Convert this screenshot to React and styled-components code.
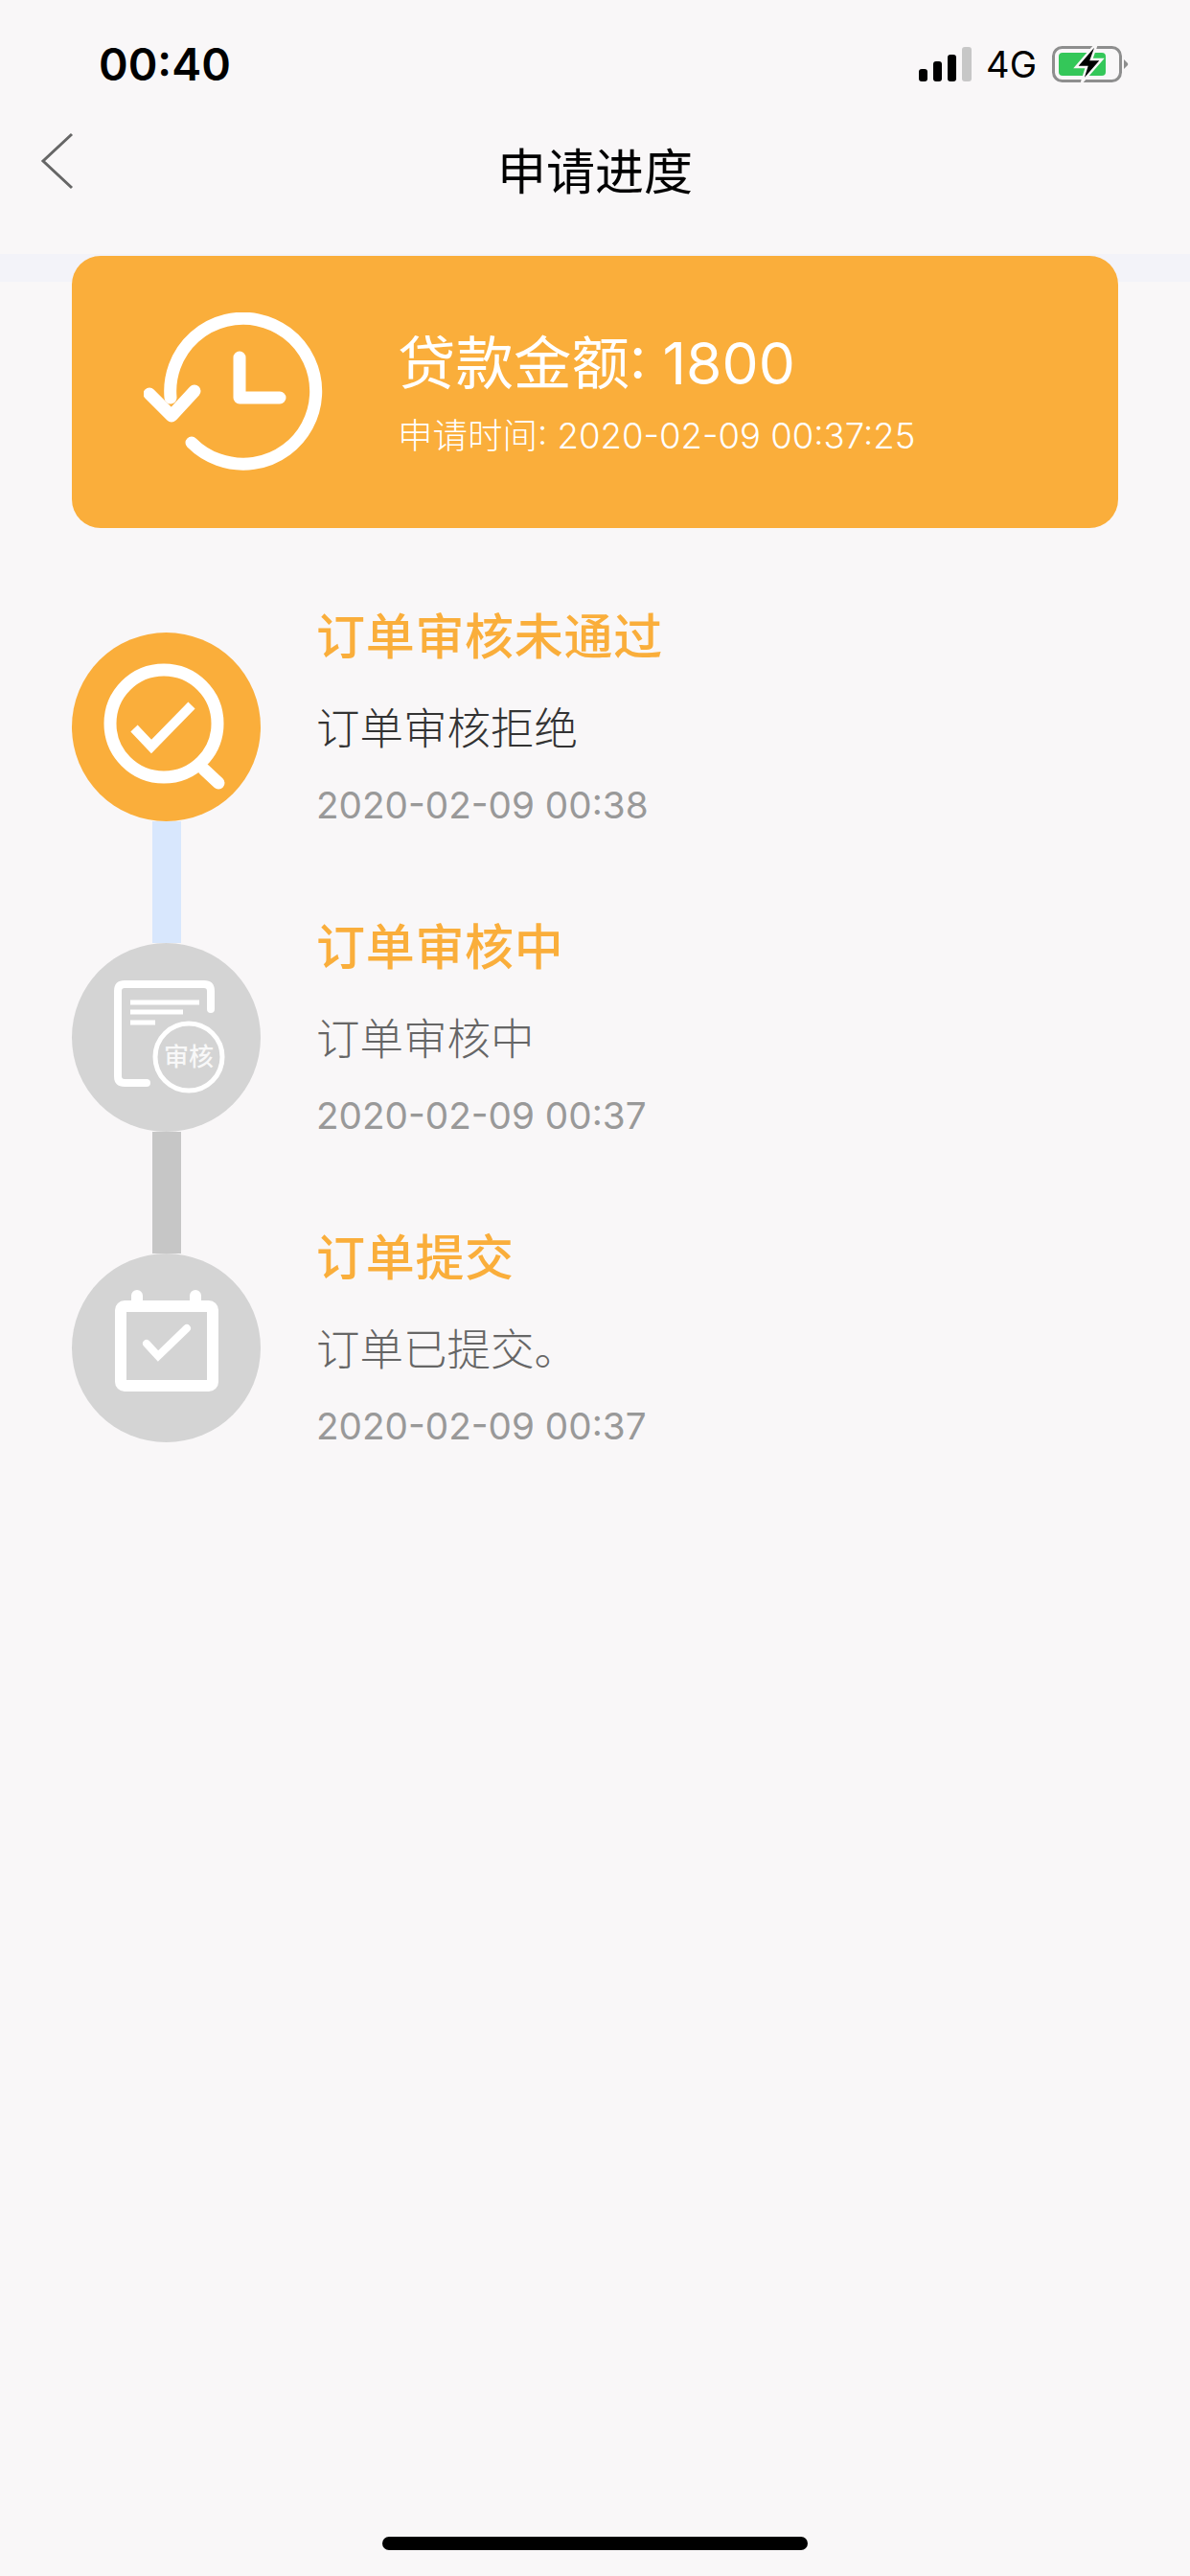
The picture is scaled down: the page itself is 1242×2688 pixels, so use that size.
import React from "react";
import styled, { createGlobalStyle } from "styled-components";

const orange = "#faae3b";
const pageBg = "#f9f7f8";

const GlobalStyle = createGlobalStyle`
  html, body {
    margin: 0;
    padding: 0;
    background: ${pageBg};
  }
  * {
    box-sizing: border-box;
  }
`;

const Page = styled.div`
  width: 1242px;
  height: 2688px;
  display: flex;
  flex-direction: column;
  background: ${pageBg};
  font-family: "Inter", "Noto Sans CJK SC", sans-serif;
  overflow: hidden;
`;

const StatusBar = styled.div`
  height: 115px;
  padding: 43px 64px 0 103px;
  display: flex;
  justify-content: space-between;
  align-items: flex-start;
`;

const Clock = styled.div`
  font-size: 46.5px;
  line-height: 48px;
  font-weight: 600;
  color: #000;
`;

const StatusIcons = styled.div`
  display: flex;
  align-items: center;
  margin-top: 4px;
`;

const NetworkLabel = styled.span`
  font-size: 38px;
  line-height: 40px;
  color: #000;
  margin: 0 16px 0 14px;
`;

const NavBar = styled.div`
  position: relative;
  height: 150px;
  display: flex;
  justify-content: center;
  padding-top: 28px;
`;

const BackIcon = styled.svg`
  position: absolute;
  left: 41px;
  top: 23px;
`;

const NavTitle = styled.h1`
  margin: 0;
  font-size: 51px;
  line-height: 66px;
  font-weight: 400;
  color: #000;
  font-family: "Noto Sans CJK SC", sans-serif;
`;

const Main = styled.main`
  position: relative;
  flex: 1;
  padding: 2px 75px 0;

  &::before {
    content: "";
    position: absolute;
    top: 0;
    left: 0;
    right: 0;
    height: 29px;
    background: #f3f3f9;
  }
`;

const SummaryCard = styled.section`
  position: relative;
  height: 284px;
  border-radius: 30px;
  background: ${orange};
  padding-left: 75px;
  display: flex;
  align-items: center;
  gap: 78px;
  color: #fff;
`;

const SummaryText = styled.div`
  display: flex;
  flex-direction: column;
  gap: 20px;
  margin-top: 2px;
`;

const Amount = styled.div`
  font-size: 60.5px;
  line-height: 70px;
  font-weight: 400;
`;

const AppliedAt = styled.div`
  font-size: 36.5px;
  line-height: 42px;
  font-weight: 300;
`;

const Timeline = styled.div`
  margin-top: 79px;
`;

const Step = styled.div`
  height: 324px;
  display: flex;
  gap: 58px;
`;

const Rail = styled.div`
  width: 197px;
  padding-top: 30px;
  display: flex;
  flex-direction: column;
  align-items: center;
  flex-shrink: 0;
`;

const Badge = styled.div`
  width: 197px;
  height: 197px;
  border-radius: 50%;
  background: ${(p) => (p.$active ? orange : "#d4d4d4")};
  flex-shrink: 0;

  svg {
    display: block;
  }
`;

const Connector = styled.div`
  width: 30px;
  height: 127px;
  flex-shrink: 0;
  background: ${(p) => p.$color};
`;

const StepBody = styled.div`
  margin-top: 0;
`;

const StepTitle = styled.div`
  font-family: "Noto Sans CJK SC", sans-serif;
  font-size: 51px;
  line-height: 62px;
  font-weight: 500;
  letter-spacing: 0.7px;
  color: ${orange};
`;

const StepNote = styled.div`
  font-family: "Noto Sans CJK SC", sans-serif;
  font-size: 45.5px;
  line-height: 56px;
  margin-top: 37px;
  font-weight: 300;
  color: ${(p) => (p.$active ? "#333" : "#666")};
`;

const StepDate = styled.div`
  font-size: 38.7px;
  line-height: 46px;
  margin-top: 32px;
  color: #999;
`;

const HomeBar = styled.div`
  position: absolute;
  left: 399px;
  top: 2647px;
  width: 444px;
  height: 14px;
  border-radius: 7px;
  background: #000;
`;

const Signal = () => (
  <svg width="56" height="36" viewBox="0 0 56 36">
    <rect x="0" y="23" width="9" height="13" rx="3" fill="#000" />
    <rect x="15" y="15" width="9" height="21" rx="3" fill="#000" />
    <rect x="30" y="8" width="9" height="28" rx="3" fill="#000" />
    <rect x="45" y="0" width="10" height="36" rx="3" fill="#c7c7c7" />
  </svg>
);

const Battery = () => (
  <svg width="80" height="38" viewBox="0 0 80 38">
    <rect x="1.5" y="1.5" width="70" height="35" rx="9" fill="none" stroke="#8e8e8e" strokeWidth="3" />
    <path d="M75 14 L79 18 Q79.5 19 79 20 L75 24 Z" fill="#8e8e8e" />
    <rect x="7" y="7" width="49" height="24" rx="4" fill="#34c759" />
    <path d="M44 0 L25 22 H36 L31 38 L52 14 H41 L46 0 Z" fill="#000" stroke={pageBg} strokeWidth="2.5" />
  </svg>
);

const HistoryIcon = () => (
  <svg width="187" height="167" viewBox="0 0 187 167" fill="none" stroke="#fff" strokeWidth="13" strokeLinecap="round" strokeLinejoin="round">
    <path d="M28 89 A76 76 0 1 1 50 136" />
    <path d="M6 85 L29 108 L53 82" />
    <path d="M100 47 V89 H142" />
  </svg>
);

const SearchCheckIcon = () => (
  <svg width="197" height="197" viewBox="0 0 197 197" fill="none" stroke="#fff">
    <circle cx="96" cy="95" r="56" strokeWidth="13" />
    <path d="M138 143 L153 157" strokeWidth="13" strokeLinecap="round" />
    <path d="M65 100 L83 119 L125 76" strokeWidth="10" />
  </svg>
);

const ReviewIcon = () => (
  <svg width="197" height="197" viewBox="0 0 197 197" fill="none" stroke="#fff">
    <path d="M145 69 V50 Q145 43 138 43 H55 Q48 43 48 50 V139 Q48 146 55 146 H78" strokeWidth="8" strokeLinecap="round" />
    <path d="M61 62 H133 M61 72 H116 M61 83 H87" strokeWidth="5" />
    <circle cx="122" cy="119" r="35" strokeWidth="5" />
    <text x="122" y="128" textAnchor="middle" fontSize="26" fontWeight="500" fill="#fff" fillOpacity="0.85" stroke="none" fontFamily="Noto Sans CJK SC, sans-serif">
      审核
    </text>
  </svg>
);

const CalendarIcon = () => (
  <svg width="197" height="197" viewBox="0 0 197 197" fill="none" stroke="#fff" strokeLinecap="round">
    <rect x="51" y="55" width="96" height="83" rx="4" strokeWidth="12" />
    <path d="M68 44 V52 M129 44 V52" strokeWidth="12" />
    <path d="M78 94 L90 107 L120 78" strokeWidth="8" />
  </svg>
);

const steps = [
  {
    title: "订单审核未通过",
    note: "订单审核拒绝",
    date: "2020-02-09 00:38",
    icon: <SearchCheckIcon />,
    active: true,
    line: "#d8e7fd",
  },
  {
    title: "订单审核中",
    note: "订单审核中",
    date: "2020-02-09 00:37",
    icon: <ReviewIcon />,
    line: "#c6c6c6",
  },
  {
    title: "订单提交",
    note: "订单已提交。",
    date: "2020-02-09 00:37",
    icon: <CalendarIcon />,
  },
];

export default function App() {
  return (
    <Page>
      <GlobalStyle />
      <StatusBar>
        <Clock>00:40</Clock>
        <StatusIcons>
          <Signal />
          <NetworkLabel>4G</NetworkLabel>
          <Battery />
        </StatusIcons>
      </StatusBar>
      <NavBar>
        <BackIcon width="38" height="60" viewBox="0 0 38 60" fill="none" stroke="#666" strokeWidth="3">
          <path d="M34 2 L4 30 L34 58" />
        </BackIcon>
        <NavTitle>申请进度</NavTitle>
      </NavBar>
      <Main>
        <SummaryCard>
          <HistoryIcon />
          <SummaryText>
            <Amount>贷款金额: 1800</Amount>
            <AppliedAt>申请时间: 2020-02-09 00:37:25</AppliedAt>
          </SummaryText>
        </SummaryCard>
        <Timeline>
          {steps.map((s) => (
            <Step key={s.title}>
              <Rail>
                <Badge $active={s.active}>{s.icon}</Badge>
                {s.line && <Connector $color={s.line} />}
              </Rail>
              <StepBody>
                <StepTitle>{s.title}</StepTitle>
                <StepNote $active={s.active}>{s.note}</StepNote>
                <StepDate>{s.date}</StepDate>
              </StepBody>
            </Step>
          ))}
        </Timeline>
      </Main>
      <HomeBar />
    </Page>
  );
}
